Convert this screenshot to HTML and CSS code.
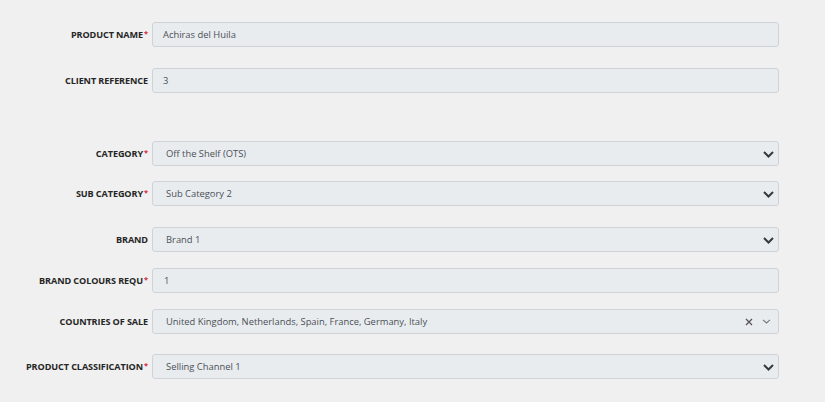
FILE: index.html
```html
<!DOCTYPE html>
<html lang="en">
<head>
<meta charset="utf-8">
<title>Product form</title>
<link rel="stylesheet" href="styles.css">
</head>
<body>
<form class="form">
  <div class="row">
    <label class="label">PRODUCT NAME<span class="req">*</span></label>
    <div class="control control--input">Achiras del Huila</div>
  </div>
  <div class="row row--g21">
    <label class="label">CLIENT REFERENCE</label>
    <div class="control control--input">3</div>
  </div>
  <div class="row row--g48">
    <label class="label">CATEGORY<span class="req">*</span></label>
    <div class="control control--select"><span class="value">Off the Shelf (OTS)</span>
      <svg class="chev" width="11" height="7" viewBox="0 0 11 7"><polyline points="1,1 5.5,5.5 10,1" fill="none" stroke="#343a40" stroke-width="2"/></svg></div>
  </div>
  <div class="row row--g15">
    <label class="label">SUB CATEGORY<span class="req">*</span></label>
    <div class="control control--select"><span class="value">Sub Category 2</span>
      <svg class="chev" width="11" height="7" viewBox="0 0 11 7"><polyline points="1,1 5.5,5.5 10,1" fill="none" stroke="#343a40" stroke-width="2"/></svg></div>
  </div>
  <div class="row row--g21">
    <label class="label">BRAND</label>
    <div class="control control--select"><span class="value">Brand 1</span>
      <svg class="chev" width="11" height="7" viewBox="0 0 11 7"><polyline points="1,1 5.5,5.5 10,1" fill="none" stroke="#343a40" stroke-width="2"/></svg></div>
  </div>
  <div class="row row--g16">
    <label class="label">BRAND COLOURS REQU<span class="req">*</span></label>
    <div class="control control--input control--num">1</div>
  </div>
  <div class="row row--g16">
    <label class="label">COUNTRIES OF SALE</label>
    <div class="control control--select control--multi"><span class="value">United Kingdom, Netherlands, Spain, France, Germany, Italy</span>
      <svg class="clear" width="8" height="8" viewBox="0 0 8 8"><path d="M1 1 L7 7 M7 1 L1 7" stroke="#555" stroke-width="1.3" fill="none"/></svg>
      <svg class="chev-thin" width="9" height="5" viewBox="0 0 9 5"><polyline points="1,0.8 4.5,4 8,0.8" fill="none" stroke="#777" stroke-width="1.1"/></svg></div>
  </div>
  <div class="row row--g20">
    <label class="label">PRODUCT CLASSIFICATION<span class="req">*</span></label>
    <div class="control control--select"><span class="value">Selling Channel 1</span>
      <svg class="chev" width="11" height="7" viewBox="0 0 11 7"><polyline points="1,1 5.5,5.5 10,1" fill="none" stroke="#343a40" stroke-width="2"/></svg></div>
  </div>
</form>
</body>
</html>
```

FILE: styles.css
```css
html, body {
  margin: 0;
  padding: 0;
  background: #f0f0f0;
}
body {
  font-family: "Open Sans", "Noto Sans", sans-serif;
  color: #333;
}
.form {
  display: flex;
  flex-direction: column;
  padding-top: 22px;
}
.row {
  display: grid;
  grid-template-columns: 148px 627px;
  column-gap: 4px;
  align-items: center;
  height: 25px;
}
.row--g15 { margin-top: 15px; }
.row--g16 { margin-top: 16px; }
.row--g20 { margin-top: 20px; }
.row--g21 { margin-top: 21px; }
.row--g48 { margin-top: 48px; }
.label {
  justify-self: end;
  font-size: 9.1px;
  font-weight: 700;
  color: #262626;
  white-space: nowrap;
  letter-spacing: -0.1px;
}
.req {
  color: #d9253a;
  font-size: 7.5px;
  vertical-align: 2px;
  margin-left: 1px;
}
.control {
  box-sizing: border-box;
  height: 25px;
  background: #e9ecef;
  border: 1px solid #cfd3d8;
  border-radius: 3px;
  display: flex;
  align-items: center;
  font-size: 9.4px;
  color: #495057;
  white-space: nowrap;
}
.control--input {
  padding-left: 10px;
}
.control--num {
  padding-left: 11px;
}
.control--select {
  padding-left: 13px;
  padding-right: 4px;
}
.value {
  flex: 1;
}
.chev {
  margin-top: 1px;
}
.control--multi .clear {
  margin-right: 9px;
}
.control--multi .chev-thin {
  margin-right: 3px;
}
```
